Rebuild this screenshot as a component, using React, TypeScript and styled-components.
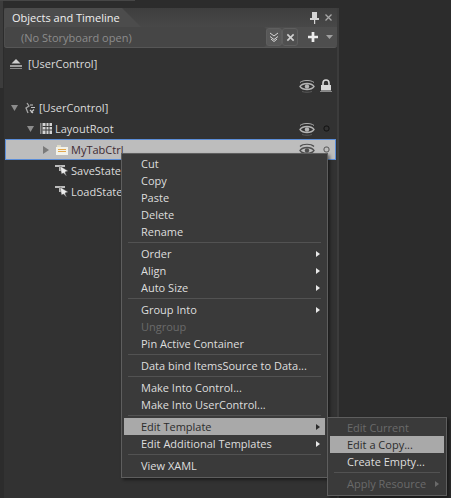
import React from 'react';
import styled, { createGlobalStyle } from 'styled-components';

const Global = createGlobalStyle`
  html, body { margin: 0; padding: 0; background: #2c2c2c; overflow: hidden; }
  * { box-sizing: border-box; }
`;

const Page = styled.div`
  position: relative;
  width: 451px;
  height: 498px;
  overflow: hidden;
  background:
    linear-gradient(#464646, #464646) 0 0 / 135px 1px no-repeat,
    linear-gradient(#3c3c3c, #3c3c3c) 0 0 / 3px 88px no-repeat,
    #2c2c2c;
  font-family: "Open Sans", "Noto Sans", sans-serif;
  font-size: 11px;
  color: #dcdcdc;
  padding: 8px 0 0 4px;
`;

const Panel = styled.section`
  width: 335px;
  height: 490px;
  background: #323232;
  border-right: 2px solid #3c3c3c;
  display: flex;
  flex-direction: column;
`;

const TabStrip = styled.header`
  height: 19px;
  display: flex;
  align-items: center;
  background: linear-gradient(#3e3e3e, #484848);
  padding-right: 5px;
`;

const Tab = styled.div`
  width: 137px;
  height: 19px;
  padding: 1px 0 0 8px;
  background: #4c4c4c;
  color: #f0f0f0;
  line-height: 17px;
  clip-path: polygon(0 0, 118px 0, 100% 100%, 0 100%);
  border-top-left-radius: 3px;
`;

const StripIcons = styled.div`
  margin-left: auto;
  display: flex;
  align-items: center;
  gap: 6px;
`;

const Toolbar = styled.div`
  height: 21px;
  display: flex;
  align-items: center;
  background: #4e4e4e;
  border-radius: 0 0 3px 3px;
  padding: 0 4px 0 1px;
  border-bottom: 1px solid #565656;
`;

const StoryboardField = styled.div`
  flex: 0 0 261px;
  height: 20px;
  display: flex;
  align-items: center;
  padding-left: 16px;
  background: #464646;
  border-radius: 3px;
  color: #8c8c8c;
`;

const ToolButton = styled.button<{ $dark?: boolean }>`
  width: 16px;
  height: 18px;
  padding: 0;
  display: flex;
  align-items: center;
  justify-content: center;
  background: ${p => (p.$dark ? '#585858' : '#505050')};
  border: 1px solid #5e5e5e;
  border-radius: 3px;
`;

const PlainIcons = styled.div`
  margin-left: auto;
  display: flex;
  align-items: center;
  gap: 8px;
`;

const Tree = styled.div`
  flex: 1;
  padding: 5px 1px 0;
`;

const Row = styled.div<{ $h?: number; $indent: number; $selected?: boolean }>`
  height: ${p => p.$h ?? 21}px;
  display: flex;
  align-items: center;
  padding-left: ${p => p.$indent}px;
  padding-right: 3px;
  color: ${p => (p.$selected ? '#3d2b33' : '#dcdcdc')};
  background: ${p => (p.$selected ? '#bdbdbd' : 'transparent')};
  border: 1px solid ${p => (p.$selected ? '#5c8ed8' : 'transparent')};
`;

const Arrow = styled.span`
  width: 12px;
  margin-right: 3px;
  display: flex;
  justify-content: center;
`;

const IconSlot = styled.span<{ $gap?: number }>`
  width: 14px;
  margin-right: ${p => p.$gap ?? 2}px;
  display: flex;
  justify-content: center;
  color: #d0d0d0;
`;

const Label = styled.span`
  white-space: nowrap;
`;

const RowEnd = styled.span`
  margin-left: auto;
  display: flex;
  align-items: center;
  gap: 5px;
  width: 33px;
`;

const StatusSlot = styled.span`
  width: 12px;
  display: flex;
  justify-content: center;
`;

const Menu = styled.div`
  position: absolute;
  background: #3a3a3a;
  border: 1px solid #5e5e5e;
  padding: 1px 2px 3px;
  box-shadow: 2px 2px 3px rgba(0, 0, 0, 0.45);
`;

const MainMenu = styled(Menu)`
  left: 121px;
  top: 153px;
  width: 207px;
`;

const SubMenu = styled(Menu)`
  left: 327px;
  top: 417px;
  width: 120px;
`;

const Item = styled.div<{ $pad: number; $disabled?: boolean; $hot?: boolean }>`
  height: 17px;
  line-height: 17px;
  display: flex;
  align-items: center;
  padding-left: ${p => p.$pad}px;
  padding-right: 5px;
  white-space: nowrap;
  color: ${p => (p.$disabled ? '#6a6a6a' : p.$hot ? '#2c2c2c' : '#dedede')};
  background: ${p => (p.$hot ? '#a9a9a9' : 'transparent')};
`;

const Caret = styled.span<{ $disabled?: boolean; $hot?: boolean }>`
  margin-left: auto;
  width: 0;
  height: 0;
  border-left: 4px solid ${p => (p.$disabled ? '#6a6a6a' : p.$hot ? '#2c2c2c' : '#e8e8e8')};
  border-top: 3.5px solid transparent;
  border-bottom: 3.5px solid transparent;
`;

const Separator = styled.div`
  height: 5px;
  margin: 0 4px;
  display: flex;
  align-items: center;
  &::before {
    content: '';
    flex: 1;
    height: 1px;
    background: #525252;
  }
`;

const ExpandedArrow = () => (
  <svg width="7" height="7" viewBox="0 0 7 7"><path d="M0 1h7L3.5 7z" fill="#8c8c8c" /></svg>
);
const CollapsedArrow = () => (
  <svg width="6" height="8" viewBox="0 0 6 8"><path d="M0 0l6 4-6 4z" fill="#7a7a7a" /></svg>
);

const EyeIcon = () => (
  <svg width="16" height="14" viewBox="0 0 16 14" fill="none">
    <path d="M1 3.5C4 .8 12 .8 15 3.5" stroke="#a8a8a8" strokeWidth="1" />
    <path d="M1 7.5C4 3.5 12 3.5 15 7.5 12 11.5 4 11.5 1 7.5z" stroke="#b4b4b4" strokeWidth="1.3" />
    <circle cx="8" cy="7.5" r="2.2" fill="#b4b4b4" />
    <path d="M3 12.5c3 1 7 1 10 0" stroke="#5a5a5a" strokeWidth="1" />
  </svg>
);
const SelectedEyeIcon = () => (
  <svg width="16" height="14" viewBox="0 0 16 14" fill="none">
    <path d="M1 3.500C4 .5 12 .5 15 3.500" stroke="#4e4e4e" strokeWidth="1.200" />
    <path d="M1 7.500C4 3.500 12 3.500 15 7.500 12 11.500 4 11.500 1 7.500z" stroke="#4e4e4e" strokeWidth="1.300" />
    <circle cx="8" cy="7.500" r="2.200" fill="#4e4e4e" />
  </svg>
);
const LockIcon = () => (
  <svg width="12" height="13" viewBox="0 0 12 13" fill="none">
    <path d="M3 6V4a3 3 0 0 1 6 0v2" stroke="#d8d8d8" strokeWidth="1.6" />
    <rect x="1" y="6" width="10" height="5.5" fill="#d8d8d8" />
    <path d="M0 12.500h12" stroke="#8a8a8a" />
  </svg>
);
const Dot = ({ dark = false }: { dark?: boolean }) => (
  <svg width="7" height="7" viewBox="0 0 7 7" fill="none">
    <rect x="1" y="1" width="5" height="5" rx="2" stroke={dark ? '#555' : '#111'} strokeWidth="1" />
  </svg>
);
const UploadIcon = () => (
  <svg width="14" height="12" viewBox="0 0 14 12">
    <path d="M7 1l4.500 4.500h-9z" fill="#cfcfcf" />
    <path d="M1 8h12" stroke="#cfcfcf" strokeWidth="1.400" />
    <path d="M1 10.500h12" stroke="#8a8a8a" strokeWidth="1" />
  </svg>
);
const ControlIcon = () => (
  <svg width="12" height="12" viewBox="0 0 12 12" fill="none">
    <path d="M3 1l2 3-3 2 2 5" stroke="#a6a6a6" strokeWidth="1.300" />
    <path d="M6 3h3M7 5.500h4M6 8l3 3M10 7.500l-3 3" stroke="#c6c6c6" strokeWidth="1.200" />
  </svg>
);
const GridIcon = () => (
  <svg width="12" height="11" viewBox="0 0 12 11">
    <path d="M0 0h1.500v11H0z" fill="#8a8a8a" />
    <path d="M2.500 0H12v11H2.500z" fill="#d4d4d4" />
    <path d="M2.500 3.500H12M2.500 7H12M6 0v11M9 0v11" stroke="#3a3a3a" strokeWidth="1" />
  </svg>
);
const TabIcon = () => (
  <svg width="12" height="10" viewBox="0 0 12 10">
    <path d="M1 0h4v2H1z" fill="#e0dcc8" />
    <path d="M0 2h12v8H0z" fill="#f2f2ea" />
    <path d="M2 4.500h8M2 6.500h8" stroke="#e4a94e" strokeWidth="1" />
  </svg>
);
const StateIcon = () => (
  <svg width="14" height="13" viewBox="0 0 14 13">
    <path d="M0 1h10v2H6v4H4V3H0z" fill="#bdbdbd" />
    <path d="M5 2l8 5-3 1 1.500 4-3-3-2 1z" fill="#ececec" stroke="#555" strokeWidth=".5" />
  </svg>
);
const PinIcon = () => (
  <svg width="9" height="12" viewBox="0 0 9 12">
    <path d="M2 0h5v6h2v2H0V6h2zM4 8h1.200v4H4z" fill="#d4d4d4" />
  </svg>
);
const CloseIcon = () => (
  <svg width="7" height="7" viewBox="0 0 7 7"><path d="M.5.5l6 6M6.500.5l-6 6" stroke="#a8a8a8" strokeWidth="1.300" /></svg>
);
const ChevronsIcon = () => (
  <svg width="10" height="10" viewBox="0 0 10 10" fill="none">
    <path d="M1 1l4 3 4-3M1 4.500l4 3 4-3M2 7l3 2.500L8 7" stroke="#d8d8d8" strokeWidth="1" />
  </svg>
);
const BoxCloseIcon = () => (
  <svg width="9" height="9" viewBox="0 0 10 10" fill="none">
    <path d="M1.500 1.500l7 7M8.500 1.500l-7 7" stroke="#d0d0d0" strokeWidth="1.800" />
  </svg>
);
const PlusIcon = () => (
  <svg width="10" height="10" viewBox="0 0 11 11"><path d="M4 0h3v4h4v3H7v4H4V7H0V4h4z" fill="#ececec" /></svg>
);
const DownCaret = () => (
  <svg width="7" height="4" viewBox="0 0 7 4"><path d="M0 0h7L3.500 4z" fill="#a0a0a0" /></svg>
);

type Entry = { t: string; sub?: boolean; disabled?: boolean; hot?: boolean } | '-';

const mainItems: Entry[] = [
  { t: 'Cut' }, { t: 'Copy' }, { t: 'Paste' }, { t: 'Delete' }, { t: 'Rename' }, '-',
  { t: 'Order', sub: true }, { t: 'Align', sub: true }, { t: 'Auto Size', sub: true }, '-',
  { t: 'Group Into', sub: true }, { t: 'Ungroup', disabled: true }, { t: 'Pin Active Container' }, '-',
  { t: 'Data bind ItemsSource to Data...' }, '-',
  { t: 'Make Into Control...' }, { t: 'Make Into UserControl...' }, '-',
  { t: 'Edit Template', sub: true, hot: true }, { t: 'Edit Additional Templates', sub: true }, '-',
  { t: 'View XAML' },
];

const subItems: Entry[] = [
  { t: 'Edit Current', disabled: true }, { t: 'Edit a Copy...', hot: true }, { t: 'Create Empty...' }, '-',
  { t: 'Apply Resource', sub: true, disabled: true },
];

const MenuEntries = ({ items, pad }: { items: Entry[]; pad: number }) => (
  <>
    {items.map((e, i) =>
      e === '-' ? (
        <Separator key={i} />
      ) : (
        <Item key={i} $pad={pad} $disabled={e.disabled} $hot={e.hot}>
          {e.t}
          {e.sub && <Caret $disabled={e.disabled} $hot={e.hot} />}
        </Item>
      ),
    )}
  </>
);

export default function App() {
  return (
    <Page>
      <Global />
      <Panel>
        <TabStrip>
          <Tab>Objects and Timeline</Tab>
          <StripIcons>
            <PinIcon />
            <CloseIcon />
          </StripIcons>
        </TabStrip>
        <Toolbar>
          <StoryboardField>(No Storyboard open)</StoryboardField>
          <ToolButton $dark><ChevronsIcon /></ToolButton>
          <ToolButton><BoxCloseIcon /></ToolButton>
          <PlainIcons>
            <PlusIcon />
            <DownCaret />
          </PlainIcons>
        </Toolbar>
        <Tree>
          <Row $h={21} $indent={3}>
            <IconSlot $gap={5}><UploadIcon /></IconSlot>
            <Label>[UserControl]</Label>
          </Row>
          <Row $h={23} $indent={3}>
            <RowEnd><EyeIcon /><StatusSlot><LockIcon /></StatusSlot></RowEnd>
          </Row>
          <Row $indent={2}>
            <Arrow><ExpandedArrow /></Arrow>
            <IconSlot><ControlIcon /></IconSlot>
            <Label>[UserControl]</Label>
          </Row>
          <Row $indent={18}>
            <Arrow><ExpandedArrow /></Arrow>
            <IconSlot><GridIcon /></IconSlot>
            <Label>LayoutRoot</Label>
            <RowEnd><EyeIcon /><StatusSlot><Dot /></StatusSlot></RowEnd>
          </Row>
          <Row $selected $indent={34}>
            <Arrow><CollapsedArrow /></Arrow>
            <IconSlot><TabIcon /></IconSlot>
            <Label>MyTabCtrl</Label>
            <RowEnd><SelectedEyeIcon /><StatusSlot><Dot dark /></StatusSlot></RowEnd>
          </Row>
          <Row $indent={49}>
            <IconSlot><StateIcon /></IconSlot>
            <Label>SaveState</Label>
          </Row>
          <Row $indent={49}>
            <IconSlot><StateIcon /></IconSlot>
            <Label>LoadState</Label>
          </Row>
        </Tree>
      </Panel>
      <MainMenu><MenuEntries items={mainItems} pad={17} /></MainMenu>
      <SubMenu><MenuEntries items={subItems} pad={17} /></SubMenu>
    </Page>
  );
}
